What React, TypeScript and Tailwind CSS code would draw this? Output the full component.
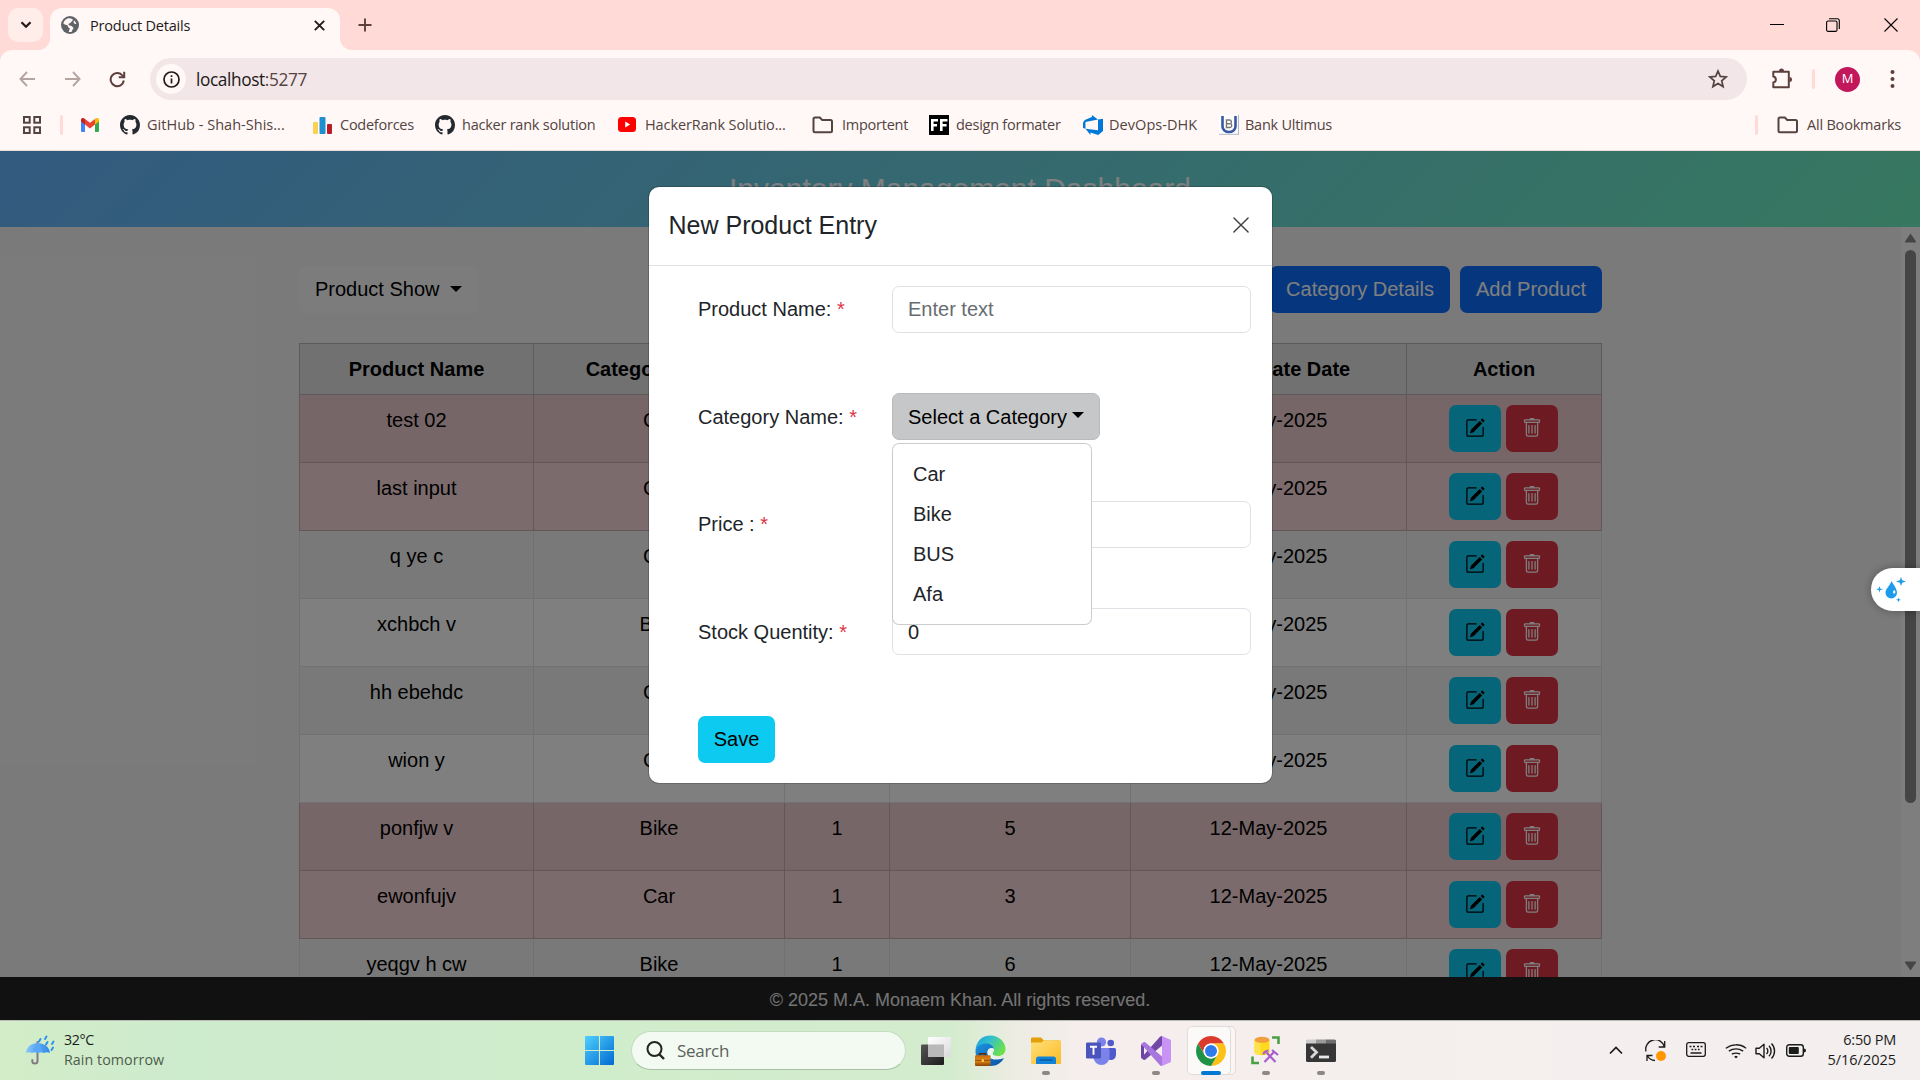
import React from "react";
import { BsPencilSquare, BsTrash, BsGithub, BsWifi } from "react-icons/bs";

const UI = "font-['Open_Sans',sans-serif]";

/* ---------- Browser icons ---------- */

const GlobeIcon = () => (
  <svg width="18" height="18" viewBox="0 0 18 18">
    <circle cx="9" cy="9" r="9" fill="#5f6368" />
    <path d="M7.2 2.2C5 2.9 3 4.6 2.3 7.2c.8 1.2 2.2 1.6 3.4 1.7 1 .2 1.2 1 1.3 1.8.2 1 1.3 1 1.6 1.6.3.8-.4 2.2-1 3.4 1 .3 2.2.3 3.2 0 .3-1.200.5-2 1.300-2.700.7-.7.4-1.700-.4-2.100-1-.5-1.500-1.100-2.500-1.300-.8-.2-1.800-.5-1.700-1.400.1-.7 1-.8 1.700-1.100.7-.4.7-1.300 1.500-1.700.9-.4 1-1.300 1-2.200-1.400-.8-3-1.200-4.500-1z" fill="#fff8f6" />
    <path d="M13 4.500c-.6 1.300-.5 2.300.3 3 .7.600 1.400.6 2 .5-.2-1.500-1.100-2.700-2.300-3.500z" fill="#fff8f6" />
  </svg>
);

const Folder = () => (
  <svg width="22" height="20" viewBox="0 0 22 20" fill="none" stroke="#534341" strokeWidth="2">
    <path d="M1.500 4.200c0-1 .6-1.700 1.500-1.700h4.800l2.400 2.500h8.300c.9 0 1.500.6 1.500 1.500v9.300c0 .9-.6 1.500-1.500 1.500H3c-.9 0-1.500-.6-1.500-1.500z" />
  </svg>
);

const Gmail = () => (
  <svg width="18" height="14" viewBox="0 0 18 14">
    <path d="M0 2v10.700c0 .7.600 1.300 1.300 1.300H4V5.600z" fill="#4285f4" />
    <path d="M18 2v10.700c0 .7-.6 1.300-1.300 1.300H14V5.600z" fill="#34a853" />
    <path d="M14 1v5.600l4-3V2c0-2-2-2.500-3.200-1.600z" fill="#fbbc04" />
    <path d="M0 2v1.600l4 3V1L3.200.4C2-.5 0 0 0 2z" fill="#c5221f" />
    <path d="M4 1l5 3.800L14 1v5.600l-5 3.800-5-3.800z" fill="#ea4335" />
  </svg>
);

const Codeforces = () => (
  <svg width="19" height="20" viewBox="0 0 19 20">
    <rect x="0" y="7" width="5" height="12" rx="1" fill="#f9d155" />
    <rect x="6.500" y="2" width="6" height="17" rx="1" fill="#1f8fce" />
    <rect x="14" y="9" width="5" height="10" rx="1" fill="#b71c27" />
  </svg>
);

const YouTube = () => (
  <svg width="18" height="15" viewBox="0 0 18 15">
    <rect width="18" height="15" rx="3.500" fill="#f00" />
    <path d="M7.200 4.500v6l5-3z" fill="#fff" />
  </svg>
);

const FF = () => (
  <svg width="20" height="20" viewBox="0 0 20 20">
    <rect width="20" height="20" fill="#000" />
    <path d="M2 16V4h7v2.500H4.600V9H8v2.500H4.600V16zM11 16V4h7.500v2.500h-4.900V9h4v2.500h-4V16z" fill="#fff" />
  </svg>
);

const DevOps = () => (
  <svg width="20" height="20" viewBox="0 0 24 24" fill="#0078d7">
    <path d="M0 8.877L2.247 5.910l8.405-3.416V.022l7.370 5.393L2.966 8.338v8.225L0 15.707zm24-4.450v14.651l-5.753 4.900-9.303-3.057v3.056l-5.978-7.416 15.057 1.798V5.415z" />
  </svg>
);

const Bank = () => (
  <svg width="20" height="20" viewBox="0 0 20 20">
    <rect width="20" height="20" fill="#fdfdfd" />
    <path d="M3.500 1v10.500a6.500 5.500 0 0 0 13 0V1" fill="none" stroke="#3a57a4" strokeWidth="2.600" />
    <path d="M7.500 5v7.500h3.200c2.600 0 2.600-3.500.6-3.700 1.700-.5 1.400-3.800-.8-3.800zM7.500 8.800h3.500" fill="none" stroke="#777" strokeWidth="1.400" />
    <path d="M0 19.300h20M19.500 0v20" stroke="#b5b8c2" />
  </svg>
);

/* ---------- Browser chrome ---------- */

function TabStrip() {
  return (
    <div className="flex h-[50px] bg-[#ffdad6] pl-2">
      <div className="mt-2 flex h-[34px] w-[35px] items-center justify-center rounded-[10px] bg-[#ffedea]">
        <svg width="12" height="8" viewBox="0 0 12 8" fill="none" stroke="#231918" strokeWidth="2.200"><path d="M1.500 1.200L6 5.800l4.500-4.600" /></svg>
      </div>
      <div className="relative ml-[7px] mt-2 flex h-[42px] w-[290px] items-center rounded-t-[12px] bg-[#fff8f6] pb-[8px] pl-[11px]">
        <svg className="absolute bottom-0 -left-3" width="12" height="12"><path d="M12 0v12H0A12 12 0 0 0 12 0z" fill="#fff8f6" /></svg>
        <svg className="absolute bottom-0 -right-3" width="12" height="12"><path d="M0 0v12h12A12 12 0 0 1 0 0z" fill="#fff8f6" /></svg>
        <GlobeIcon />
        <span className="ml-[11px] w-[224px] whitespace-nowrap pt-[2px] text-[14.500px] tracking-[-0.200px] text-[#231918]">Product Details</span>
        <svg width="11" height="11" viewBox="0 0 11 11" stroke="#231918" strokeWidth="1.900"><path d="M.8.8l9.400 9.400M10.200.8L.8 10.200" /></svg>
      </div>
      <svg className="ml-[18px] mt-[18px]" width="14" height="14" viewBox="0 0 14 14" stroke="#5d403c" strokeWidth="1.900"><path d="M7 .5v13M.5 7h13" /></svg>
      <div className="ml-auto mt-[17px] flex h-4 items-center pr-[22px]">
        <svg width="14" height="14" stroke="#000"><path d="M0 6.500h14" /></svg>
        <svg className="ml-[42px]" width="14" height="14" viewBox="0 0 14 14" fill="none" stroke="#000" strokeWidth="1.100"><rect x=".6" y="3" width="10.400" height="10.400" rx="1.500" /><path d="M3 .8h8.300c1.200 0 2 .8 2 2V11" /></svg>
        <svg className="ml-[44px]" width="14" height="14" viewBox="0 0 14 14" stroke="#000" strokeWidth="1.100"><path d="M.5.5l13 13M13.500.5l-13 13" /></svg>
      </div>
    </div>
  );
}

function Toolbar() {
  return (
    <div className="bg-[#ffdad6]">
      <div className="flex h-[58px] items-center rounded-t-[12px] bg-[#fff8f6] pl-[19px]">
        <svg width="16" height="16" viewBox="0 0 16 16" fill="none" stroke="#b4a5a3" strokeWidth="1.900"><path d="M8 1L1.400 8 8 15M1.500 8H16" /></svg>
        <svg className="ml-[30px]" width="16" height="16" viewBox="0 0 16 16" fill="none" stroke="#b4a5a3" strokeWidth="1.900"><path d="M8 1l6.600 7L8 15M14.500 8H0" /></svg>
        <svg className="ml-[28px]" width="17" height="17" viewBox="0 0 17 17" fill="none" stroke="#5d403c" strokeWidth="2"><path d="M14.800 9.500a6.600 6.600 0 1 1-1.700-5.400L15 6" /><path d="M15.200.8v5.400H9.800" /></svg>
        <div className="ml-[24px] flex h-[42px] w-[1597px] items-center rounded-full bg-[#f2e6e8] pl-[6px] pr-[19px]">
          <div className="flex h-[30px] w-[30px] items-center justify-center rounded-full bg-[#fff8f6]">
            <svg width="17" height="17" viewBox="0 0 17 17" fill="none" stroke="#231918" strokeWidth="1.700"><circle cx="8.500" cy="8.500" r="7.500" /><path d="M8.500 7.500v5M8.500 4.200v1.800" /></svg>
          </div>
          <span className="ml-[10px] pt-px text-[17.250px] tracking-[-0.380px] text-[#231918]">localhost<span className="text-[#534341]">:5277</span></span>
          <svg className="ml-auto" width="20" height="20" viewBox="0 0 20 20" fill="none" stroke="#534341" strokeWidth="1.700"><path d="M10 2l2.300 5.400 5.900.5-4.500 3.900 1.400 5.800L10 14.500l-5.100 3.100 1.400-5.800-4.500-3.900 5.900-.5z" /></svg>
        </div>
        <svg className="ml-[24px]" width="22" height="22" viewBox="0 0 22 22">
          <path d="M2.300 3.700h15.500v15.500H2.300v-4.700a3.100 3.100 0 0 0 0-6.100z" fill="none" stroke="#5d403c" strokeWidth="2" strokeLinejoin="round" />
          <path d="M8 3a2.500 2.500 0 0 1 5 0zM18.500 8.900a2.500 2.500 0 0 1 0 5z" fill="#5d403c" />
        </svg>
        <div className="ml-[19px] h-[20px] w-[3px] rounded bg-[#ffdad6]" />
        <div className="ml-[20px] flex h-[25px] w-[25px] items-center justify-center rounded-full bg-[#c2185b] text-[13px] text-white">M</div>
        <svg className="ml-[30px]" width="5" height="20" viewBox="0 0 5 20" fill="#5d403c"><circle cx="2.500" cy="3" r="2" /><circle cx="2.500" cy="10" r="2" /><circle cx="2.500" cy="17" r="2" /></svg>
      </div>
    </div>
  );
}

function Bookmark({ width, icon, label, track = "tracking-[-0.250px]" }: { width: string; icon: React.ReactNode; label?: string; track?: string }) {
  return (
    <div className={`flex shrink-0 items-center whitespace-nowrap text-[14.500px] text-[#534341] ${width} ${track}`}>
      {icon}
      {label && <span>{label}</span>}
    </div>
  );
}

function BookmarksBar() {
  return (
    <div className="flex h-[43px] items-center border-b border-[#e9dcd9] bg-[#fff8f6] pb-[9px] pl-[23px]">
      <svg width="18" height="18" viewBox="0 0 18 18" fill="none" stroke="#534341" strokeWidth="2"><rect x="1" y="1" width="5.700" height="5.700" /><rect x="11.300" y="1" width="5.700" height="5.700" /><rect x="1" y="11.300" width="5.700" height="5.700" /><rect x="11.300" y="11.300" width="5.700" height="5.700" /></svg>
      <div className="ml-[19px] mr-[18px] h-[20px] w-[3px] rounded bg-[#ffdad6]" />
      <Bookmark width="w-[39px]" icon={<Gmail />} />
      <Bookmark width="w-[193px] gap-[7px]" icon={<BsGithub size={20} color="#24292f" />} label="GitHub - Shah-Shis..." track="tracking-[0.020px]" />
      <Bookmark width="w-[122px] gap-[8px]" icon={<Codeforces />} label="Codeforces" />
      <Bookmark width="w-[183px] gap-[7px]" icon={<BsGithub size={20} color="#24292f" />} label="hacker rank solution" track="tracking-[-0.240px]" />
      <Bookmark width="w-[194px] gap-[9px]" icon={<YouTube />} label="HackerRank Solutio..." track="tracking-[-0.100px]" />
      <Bookmark width="w-[117px] gap-[8px]" icon={<Folder />} label="Importent" />
      <Bookmark width="w-[154px] gap-[7px]" icon={<FF />} label="design formater" />
      <Bookmark width="w-[136px] gap-[6px]" icon={<DevOps />} label="DevOps-DHK" track="tracking-[0.050px]" />
      <Bookmark width="w-[130px] gap-[6px]" icon={<Bank />} label="Bank Ultimus" />
      <div className="ml-auto mr-[19px] h-[20px] w-[3px] rounded bg-[#ffdad6]" />
      <Bookmark width="w-[143px] gap-[8px]" icon={<Folder />} label="All Bookmarks" track="tracking-[-0.200px]" />
    </div>
  );
}

/* ---------- Page ---------- */

type Row = { name: string; category: string; price: string; stock: string; tone: string };

const DANGER_ODD = "bg-[#eccccf] [&>td]:border-[#c6acae]";
const DANGER_EVEN = "bg-[#f8d7da] [&>td]:border-[#c6acae]";
const PLAIN_ODD = "bg-[#f2f2f2] [&>td]:border-[#dee2e6]";
const PLAIN_EVEN = "bg-white [&>td]:border-[#dee2e6]";

const rows: Row[] = [
  { name: "test 02", category: "Car", price: "1", stock: "2", tone: DANGER_ODD },
  { name: "last input", category: "Car", price: "1", stock: "2", tone: DANGER_EVEN },
  { name: "q ye c", category: "Car", price: "1", stock: "8", tone: PLAIN_ODD },
  { name: "xchbch v", category: "Bike", price: "1", stock: "8", tone: PLAIN_EVEN },
  { name: "hh ebehdc", category: "Car", price: "1", stock: "8", tone: PLAIN_ODD },
  { name: "wion y", category: "Car", price: "1", stock: "8", tone: PLAIN_EVEN },
  { name: "ponfjw v", category: "Bike", price: "1", stock: "5", tone: DANGER_ODD },
  { name: "ewonfujv", category: "Car", price: "1", stock: "3", tone: DANGER_EVEN },
  { name: "yeqgv h cw", category: "Bike", price: "1", stock: "6", tone: PLAIN_ODD },
];

const headings = ["Product Name", "Category Name", "Price", "Stock Quentity", "Last Update Date", "Action"];

function ProductTable() {
  return (
    <table className="mt-[30px] w-[1302px] table-fixed border-collapse text-center text-black">
      <colgroup>
        <col className="w-[234px]" />
        <col className="w-[251px]" />
        <col className="w-[105px]" />
        <col className="w-[241px]" />
        <col className="w-[276px]" />
        <col className="w-[195px]" />
      </colgroup>
      <thead>
        <tr className="h-[51px] bg-[#e2e3e5]">
          {headings.map((h) => (
            <th key={h} className="whitespace-nowrap border border-[#b5b6b7] p-0 font-bold">{h}</th>
          ))}
        </tr>
      </thead>
      <tbody>
        {rows.map((r) => (
          <tr key={r.name} className={`h-[68px] [&>td]:border [&>td]:p-0 [&>td]:pt-[10px] [&>td]:align-top ${r.tone}`}>
            <td>{r.name}</td>
            <td>{r.category}</td>
            <td>{r.price}</td>
            <td>{r.stock}</td>
            <td>12-May-2025</td>
            <td>
              <div className="flex justify-center gap-[5px] pr-px">
                <span className="flex h-[47px] w-[52px] items-center justify-center rounded-[7px] bg-[#0dcaf0] pb-[1px]"><BsPencilSquare size={20} /></span>
                <span className="flex h-[47px] w-[52px] items-center justify-center rounded-[7px] bg-[#dc3545] pb-[1px] text-white"><BsTrash size={20} /></span>
              </div>
            </td>
          </tr>
        ))}
      </tbody>
    </table>
  );
}

function Caret({ className }: { className: string }) {
  return <span className={`inline-block h-0 w-0 border-x-[6px] border-t-[6px] border-x-transparent border-t-black ${className}`} />;
}

function Dashboard() {
  return (
    <div className="flex h-[869px] flex-col">
      <header className="flex h-[76px] shrink-0 items-center justify-center bg-[linear-gradient(135deg,#66b4ff_0%,#6ef0c0_100%)] pb-px text-[30px] text-white">Inventory Management Dashboard</header>
      <div className="flex h-[750px] overflow-hidden bg-[#f5f5f5]">
        <div className="w-[1901px] pl-[299px] pt-[39px]">
          <div className="flex w-[1303px] text-[20px]">
            <div className="flex h-[47px] w-[179px] items-center rounded-[7px] bg-[#f8f9fa] pb-[2px] pl-[16px] text-black">Product Show<Caret className="ml-[10px]" /></div>
            <div className="ml-auto flex h-[47px] w-[180px] items-center justify-center rounded-[7px] bg-[#0d6efd] pb-[2px] text-white">Category Details</div>
            <div className="ml-[10px] flex h-[47px] w-[142px] items-center justify-center rounded-[7px] bg-[#0d6efd] pb-[2px] text-white">Add Product</div>
          </div>
          <ProductTable />
        </div>
        <div className="flex w-[19px] flex-col items-center bg-[#fcfcfc] py-[6px]">
          <svg width="13" height="10"><path d="M6.500 0.500L12 8.500Q12.500 9.500 11.500 9.500H1.500Q.5 9.500 1 8.500z" fill="#8b8b8b" /></svg>
          <div className="mt-[7px] h-[553px] w-[11px] rounded-full bg-[#8b8b8b]" />
          <svg className="mt-auto" width="13" height="10"><path d="M6.500 9.500L1 1.500Q.5.500 1.500.5H11.500Q12.500.5 12 1.500z" fill="#8b8b8b" /></svg>
        </div>
      </div>
      <footer className="flex h-[43px] items-center justify-center bg-[#222] pt-[3px] text-[18px] text-white/90">© 2025 M.A. Monaem Khan. All rights reserved.</footer>
    </div>
  );
}

function Field({ label, children }: { label: string; children: React.ReactNode }) {
  return (
    <div className="flex h-[107.500px] items-start">
      <span className="flex h-[47px] w-[194px] items-center whitespace-pre">{label} <span className="text-[#dc3545]">*</span></span>
      {children}
    </div>
  );
}

const INPUT = "flex h-[47px] w-[359px] items-center rounded-[7px] border border-[#dee2e6] bg-white pl-[15px]";

function ProductModal() {
  return (
    <div className="absolute left-[649px] top-[36px] h-[596px] w-[623px] rounded-[10px] bg-white text-[20px] text-[#212529] shadow-[0_0_0_1px_rgba(0,0,0,0.18)]">
      <div className="flex h-[79px] items-center justify-between border-b border-[#dee2e6] pb-[2px] pl-[19.500px] pr-[23px] text-[25px]">
        New Product Entry
        <svg width="16" height="16" viewBox="0 0 17 17" stroke="#3f3f3f" strokeWidth="1.500" strokeLinecap="round"><path d="M1 1l15 15M16 1L1 16" /></svg>
      </div>
      <div className="pl-[49px] pt-[19.750px]">
        <Field label="Product Name:"><div className={`${INPUT} text-[#686c70]`}>Enter text</div></Field>
        <Field label="Category Name:">
          <div className="relative z-10">
            <div className="flex h-[47px] w-[208px] items-center rounded-[7px] border border-[#babbbc] bg-[#c6c7c8] pl-[15px] text-black">Select a Category<Caret className="-mt-[4px] ml-[5px]" /></div>
            <div className="absolute left-0 top-[50px] w-[200px] rounded-[7px] border border-black/20 bg-white py-[10px] pl-[20px] leading-[40px]">
              <div>Car</div>
              <div>Bike</div>
              <div>BUS</div>
              <div>Afa</div>
            </div>
          </div>
        </Field>
        <Field label="Price :"><div className={INPUT} /></Field>
        <Field label="Stock Quentity:"><div className={INPUT}>0</div></Field>
        <div className="flex h-[47px] w-[77px] items-center justify-center rounded-[7px] bg-[#0dcaf0] text-black">Save</div>
      </div>
    </div>
  );
}

function AssistantPill() {
  return (
    <div className="absolute right-0 top-[417px] flex h-[43px] w-[49px] items-center rounded-l-full bg-white pl-[5px] shadow-[0_0_8px_rgba(0,0,0,0.3)]">
      <svg width="31" height="28" viewBox="0 0 31 28" fill="#1e9bea">
        <path d="M15.500 5c2 4 5.500 7.500 5.500 11.700a5.700 5.700 0 0 1-11.500 0C9.500 12.500 14 10 15.500 5z" />
        <path d="M25 1l1.200 3.300L30 5.500l-3.800 1.200L25 10l-1.200-3.300L20 5.500l3.800-1.200zM3.500 10l.8 2.400 2.700.8-2.700.9-.8 2.400-.8-2.400L0 13.200l2.700-.8zM22.500 21.500l.6 1.700 1.900.6-1.900.6-.6 1.800-.6-1.800-1.900-.6 1.900-.6z" />
        <ellipse cx="18.200" cy="16" rx="1.200" ry="1.800" fill="#fff" />
      </svg>
    </div>
  );
}

/* ---------- Taskbar ---------- */

const WeatherIcon = () => (
  <svg width="30" height="32" viewBox="0 0 30 32">
    <defs><linearGradient id="umb"><stop offset="0" stopColor="#86c7fb" /><stop offset="1" stopColor="#2f87e8" /></linearGradient></defs>
    <path d="M12.500 7v19a2.600 2.600 0 0 1-5.200 0v-1" fill="none" stroke="#857a82" strokeWidth="2" strokeLinecap="round" />
    <path d="M1 18C1.500 11.500 7 8 12.700 8S24.500 11.500 25 18q-3-1.500-6 0-3-1.500-6.300 0Q9 16.500 7 18q-3-1.500-6 0z" fill="url(#umb)" />
    <path d="M12.700 8C9 10.500 8.200 14 8.500 17.500c2-.8 3-.3 4.200.5 1.300-.8 2.500-1.200 4.300-.5.2-3.500-.8-7-4.300-9.500z" fill="#5aa8f5" />
    <path d="M15.500 4l-1.500 2.500M21.500 1.500L20 4M22.500 7L21 9.500M28.500 6.500L27 9M28 12.500L26.500 15" stroke="#2f93ee" strokeWidth="2" strokeLinecap="round" />
  </svg>
);

const WindowsLogo = () => (
  <svg width="29" height="29" viewBox="0 0 29 29">
    <defs><linearGradient id="win" x1="0" y1="0" x2="29" y2="29" gradientUnits="userSpaceOnUse"><stop offset="0" stopColor="#4fd0ff" /><stop offset="1" stopColor="#0069d0" /></linearGradient></defs>
    <path d="M0 1q0-1 1-1h12.900v13.900H0zM15 0h13q1 0 1 1v12.900H15zM0 15h13.900v14H1q-1 0-1-1zM15 15h14v13q0 1-1 1H15z" fill="url(#win)" />
  </svg>
);

const TaskView = () => (
  <svg width="30" height="28" viewBox="0 0 30 28">
    <defs>
      <linearGradient id="tv1" x1="0" y1="0" x2="1" y2="1"><stop offset="0" stopColor="#555" /><stop offset="1" stopColor="#1c1c1c" /></linearGradient>
      <linearGradient id="tv2" x1="0" y1="0" x2="1" y2="1"><stop offset="0" stopColor="#fff" /><stop offset="1" stopColor="#dadada" /></linearGradient>
    </defs>
    <rect y="7.500" width="23" height="20.500" rx="1" fill="url(#tv1)" />
    <rect x="7" width="23" height="20" rx="1" fill="url(#tv2)" />
    <path d="M7 7.500h16V20H7z" fill="#b9b9b9" />
  </svg>
);

const EdgeIcon = () => (
  <svg width="31" height="31" viewBox="0 0 31 31">
    <defs>
      <linearGradient id="e1" x1="0" y1="0" x2="1" y2=".5"><stop offset="0" stopColor="#1b9de2" /><stop offset=".5" stopColor="#35c1c8" /><stop offset="1" stopColor="#6be04d" /></linearGradient>
      <linearGradient id="e2" x1="0" y1="0" x2="1" y2="1"><stop offset="0" stopColor="#1b94e0" /><stop offset="1" stopColor="#0c52a8" /></linearGradient>
      <linearGradient id="e3" x1="0" y1="0" x2="0" y2="1"><stop offset="0" stopColor="#c7690c" /><stop offset=".5" stopColor="#e08a1a" /><stop offset="1" stopColor="#8b4306" /></linearGradient>
    </defs>
    <path d="M.5 15C1 6.500 7 .5 15.500.5S30.500 7 30.500 14c0 4.500-3.500 7-7.500 7-3 0-5.500-1-5.500-2.500 0-1 1.500-1.500 1.500-4 0-3-3-5.500-7-5.500C6.500 9 2 11 .5 15z" fill="url(#e1)" />
    <path d="M.5 15C2 10.500 6.500 8.500 11 8.500c4 0 7.500 2 8 5.500-1.500-1.500-6-1.500-6.500 3 0 5 5 8 10 7.500 3 0 5-1 6.500-1.500-2.500 4.500-7 8-13.500 8C6 31 0 24 .5 15z" fill="url(#e2)" />
    <path d="M12.500 17c.3-3 3-4.800 6.500-3 .3 2-1.500 3-1.500 4.500 0 2 3 4.500 8 4-3 1.500-6 2-8 1.500-3-1-5.200-3.500-5-7z" fill="#e9f4ee" />
    <path d="M4.500 20.500v-1.700h6v1.700" fill="none" stroke="#5a2b08" strokeWidth="1.600" />
    <rect x="0" y="20.300" width="15.500" height="10.700" rx="1" fill="url(#e3)" />
    <path d="M0 25.300h15.500" stroke="#7a3a06" strokeWidth=".8" />
    <rect x="6.700" y="24.300" width="2.200" height="2.600" fill="#ffd34d" />
  </svg>
);

const ExplorerIcon = () => (
  <svg width="30" height="27" viewBox="0 0 30 27">
    <defs><linearGradient id="fx" x1="0" y1="0" x2="1" y2="1"><stop offset="0" stopColor="#ffe07a" /><stop offset="1" stopColor="#fdbb25" /></linearGradient></defs>
    <path d="M0 1.500Q0 .5 1 .5h9l3 3h15.500q1 0 1 1V8H0z" fill="#e3a008" />
    <path d="M0 6.500q0-1 1-1h9.500l2-2H29q1 0 1 1V26q0 1-1 1H1q-1 0-1-1z" fill="url(#fx)" />
    <path d="M5 27v-5q0-2.500 2.500-2.500h15Q25 19.500 25 22v5z" fill="#1383d8" />
    <path d="M8.500 23h13" stroke="#0a4f94" strokeWidth="1.200" />
  </svg>
);

const TeamsIcon = () => (
  <svg width="30" height="28" viewBox="0 0 30 28">
    <circle cx="24.700" cy="6" r="3.300" fill="#5059c9" />
    <path d="M20 11h8.500q1.500 0 1.500 1.500V18a5 5 0 0 1-8 4z" fill="#5059c9" />
    <circle cx="15.500" cy="5" r="4.600" fill="#7b83eb" />
    <path d="M9 11h13q1.500 0 1.500 1.500V20a8 8 0 0 1-16 0z" fill="#7b83eb" />
    <rect y="5.500" width="15" height="16" rx="1.300" fill="#4b53bc" />
    <path d="M4 9.800h7M7.500 9.800v8" stroke="#fff" strokeWidth="1.900" />
  </svg>
);

const VisualStudioIcon = () => (
  <svg width="30" height="30" viewBox="0 0 30 30">
    <path d="M0 8.500l3 1.500v10l-3 2z" fill="#6a45a3" />
    <path d="M21 0v9.500L4.500 23.500q-1 .8-2 .2L0 22 19 .8Q20 0 21 0z" fill="#7247a8" />
    <path d="M0 8l2.500-1.700q1-.6 2 .2L21 20.500V30q-1 0-2-.8z" fill="#a777dd" />
    <path d="M21 0l8 3.600q1 .4 1 1.500v20q0 1-1 1.500L21 30z" fill="#c993f5" />
  </svg>
);

const ChromeIcon = () => (
  <svg width="30" height="30" viewBox="2 2 44 44">
    <path d="M4.950 13A22 22 0 0 1 43.050 13H24A11 11 0 0 0 14.470 29.500Z" fill="#dc3a2c" />
    <path d="M43.050 13A22 22 0 0 1 24 46L33.530 29.500A11 11 0 0 0 24 13Z" fill="#fbc116" />
    <path d="M24 46A22 22 0 0 1 4.950 13L14.470 29.500A11 11 0 0 0 33.530 29.500Z" fill="#209245" />
    <circle cx="24" cy="24" r="11" fill="#fff" />
    <circle cx="24" cy="24" r="8.800" fill="#2f7bea" />
  </svg>
);

const SqlStudioIcon = () => (
  <svg width="29" height="29" viewBox="0 0 29 29">
    <path d="M3.500 4v12.500c0 3.500 15 3.500 15 0V4z" fill="#ffd91c" />
    <path d="M3.500 4v12.500c0 1.500 3 2.300 6 2.500V4z" fill="#ffe14d" />
    <ellipse cx="11" cy="3.800" rx="7.500" ry="3" fill="#ef9f3d" />
    <path d="M21 1.500h6.500V8M1.500 20.500V27H8" fill="none" stroke="#4ba046" strokeWidth="2.600" />
    <path d="M13.500 26l9-9.500M24.500 26l-9-9.500M21 14l6 5M12.500 18.500q0-3 5-4" stroke="#a85fcf" strokeWidth="2.200" fill="none" />
  </svg>
);

const TerminalIcon = () => (
  <svg width="30" height="23" viewBox="0 0 30 23">
    <rect y="1" width="30" height="22" rx="1.500" fill="#363636" />
    <path d="M0 4.500V2Q0 .5 1.500.5H10v4z" fill="#ccc" /><path d="M10 .5h10v4H10z" fill="#999" /><path d="M20 .5h8.500Q30 .5 30 2v2.500H20z" fill="#6e6e6e" />
    <path d="M5 8l5.500 5.300L5 18.700" fill="none" stroke="#d8d8d8" strokeWidth="2.800" />
    <path d="M13 18h10" stroke="#e8e8e8" strokeWidth="2.800" />
  </svg>
);

function TaskSlot({ children, mark }: { children: React.ReactNode; mark?: boolean }) {
  return (
    <div className="relative flex h-[60px] w-[55px] items-center justify-center">
      {children}
      {mark && <span className="absolute bottom-[6px] h-[4px] w-[8px] rounded-full bg-[#8b8886]" />}
    </div>
  );
}

function Taskbar() {
  return (
    <div className="flex h-[60px] items-center border-t border-[#b9bdb5] bg-[linear-gradient(90deg,#d3edc8_0px,#cdebcd_180px,#d0edcb_600px,#d3eccd_950px,#ebece1_1010px,#f5eeed_1080px,#f4efef_1920px)] text-[15px] text-[#1b1b1b]">
      <div className="flex w-[585px] items-center pl-[25px]">
        <WeatherIcon />
        <div className="ml-[9px] whitespace-nowrap pb-[2px] text-[14.250px] leading-[20px]">
          <div className="tracking-[-0.400px]">32°C</div>
          <div className="tracking-[0.060px] text-[#4f5b4e]">Rain tomorrow</div>
        </div>
      </div>
      <WindowsLogo />
      <div className="ml-[17px] flex h-[39px] w-[275px] items-center rounded-full border border-b-[#a9bfa6] border-[#c5dcc2] bg-[#f2faf1] pl-[14px]">
        <svg width="19" height="19" viewBox="0 0 19 19" fill="none" stroke="#242424" strokeWidth="2"><circle cx="8.500" cy="8" r="7" /><path d="M13 13l5 5" strokeWidth="2.400" /></svg>
        <span className="ml-[12px] text-[17px] tracking-[-0.300px] text-[#5c625b]">Search</span>
      </div>
      <div className="ml-[2px] flex">
        <TaskSlot><TaskView /></TaskSlot>
        <TaskSlot><EdgeIcon /></TaskSlot>
        <TaskSlot mark><ExplorerIcon /></TaskSlot>
        <TaskSlot><TeamsIcon /></TaskSlot>
        <TaskSlot mark><VisualStudioIcon /></TaskSlot>
        <div className="relative flex h-[60px] w-[55px] items-center justify-center">
          <div className="absolute left-[8px] top-[5px] h-[49px] w-[45px] rounded-[5px] border border-[#e0dbda] bg-[#f8f5f4]" />
          <div className="absolute left-[4px] top-[5px] h-[49px] w-[44px] rounded-[5px] border border-[#e0dcda] bg-[#fcfaf9]" />
          <div className="relative"><ChromeIcon /></div>
          <span className="absolute bottom-[6px] h-[4px] w-[20px] rounded-full bg-[#0078d4]" />
        </div>
        <TaskSlot mark><SqlStudioIcon /></TaskSlot>
        <TaskSlot mark><TerminalIcon /></TaskSlot>
      </div>
      <div className="ml-auto flex items-center pr-[24px]">
        <svg width="14" height="9" viewBox="0 0 14 9" fill="none" stroke="#1b1b1b" strokeWidth="1.700"><path d="M1 7.500l6-6 6 6" /></svg>
        <svg className="ml-[22px]" width="22" height="22" viewBox="0 0 22 22" fill="none" stroke="#1b1b1b" strokeWidth="1.300">
          <path d="M1 11.500A9.200 9.200 0 0 1 19.500 7M19.700 1v6h-6M2 21v-5.500h5.500M2.500 16A9 9 0 0 0 10 20.500" />
          <circle cx="16" cy="16" r="5" fill="#ff9800" stroke="none" />
        </svg>
        <svg className="mb-[2px] ml-[19px]" width="20" height="15" viewBox="0 0 20 15" fill="none" stroke="#1b1b1b" strokeWidth="1.300"><rect x=".7" y=".7" width="18.600" height="13.600" rx="2" /><path d="M3.500 4.500h2m1.500 0h2m2 0h2m1.500 0h2M5.500 7.500h1.700m1.500 0h1.700m1.500 0h1.700M4.500 11h11" /></svg>
        <BsWifi className="ml-[19px]" size={22} />
        <svg className="ml-[8px]" width="21" height="18" viewBox="0 0 21 18" fill="none" stroke="#1b1b1b" strokeWidth="1.400"><path d="M1 6.200v5.600h3.300L9 15.700V2.300L4.300 6.200z" strokeLinejoin="round" /><path d="M11.500 6a4 4 0 0 1 0 6M14 3.800a7.500 7.500 0 0 1 0 10.400M16.500 1.500a10.800 10.800 0 0 1 0 15" /></svg>
        <svg className="ml-[10px]" width="20" height="13" viewBox="0 0 20 13"><rect x=".7" y=".7" width="16.600" height="11.600" rx="2.500" fill="none" stroke="#1b1b1b" strokeWidth="1.400" /><rect x="2.800" y="3" width="10" height="7" rx="1" fill="#1b1b1b" /><path d="M18 4.500q2 0 2 2t-2 2z" fill="#1b1b1b" /></svg>
        <div className="ml-[20px] w-[70px] whitespace-nowrap pb-[2px] text-right text-[14.500px] leading-[20px]">
          <div className="tracking-[-0.200px]">6:50 PM</div>
          <div className="tracking-[-0.020px]">5/16/2025</div>
        </div>
      </div>
    </div>
  );
}

export default function App() {
  return (
    <div className={`flex h-[1080px] w-[1920px] flex-col overflow-hidden ${UI}`}>
      <TabStrip />
      <Toolbar />
      <BookmarksBar />
      <div className="relative h-[869px] font-['Liberation_Sans',sans-serif] text-[20px] leading-[30px]">
        <Dashboard />
        <div className="absolute inset-0 bg-black/50" />
        <ProductModal />
        <AssistantPill />
      </div>
      <Taskbar />
    </div>
  );
}
